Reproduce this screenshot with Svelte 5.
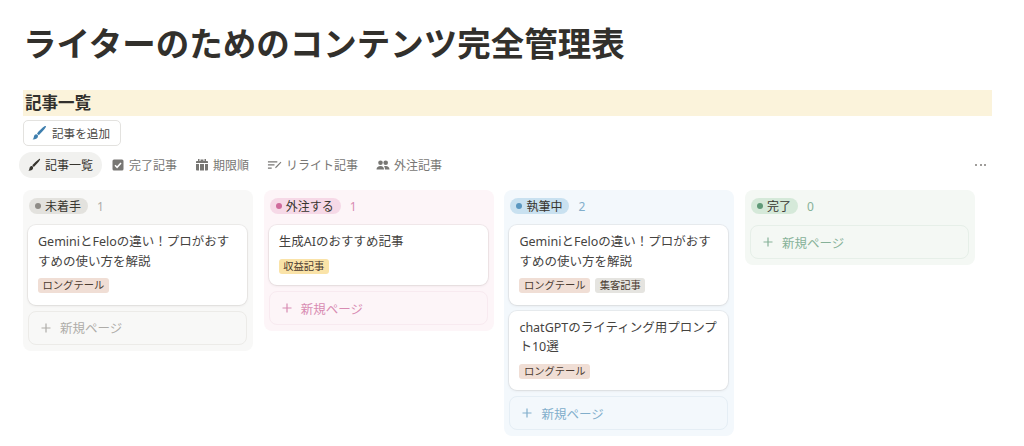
<script>
	const tabs = [
		{ label: '記事一覧', icon: 'brush', active: true },
		{ label: '完了記事', icon: 'check' },
		{ label: '期限順', icon: 'calendar' },
		{ label: 'リライト記事', icon: 'rewrite' },
		{ label: '外注記事', icon: 'people' }
	];

	const long = { text: 'ロングテール', tone: 'brown' };
	const columns = [
		{
			name: '未着手', tone: 'gray', count: 1,
			cards: [{ title: 'GeminiとFeloの違い！プロがおすすめの使い方を解説', tags: [long] }]
		},
		{
			name: '外注する', tone: 'pink', count: 1,
			cards: [{ title: '生成AIのおすすめ記事', tags: [{ text: '収益記事', tone: 'yellow' }] }]
		},
		{
			name: '執筆中', tone: 'blue', count: 2,
			cards: [
				{ title: 'GeminiとFeloの違い！プロがおすすめの使い方を解説', tags: [long, { text: '集客記事', tone: 'grey' }] },
				{ title: 'chatGPTのライティング用プロンプト10選', tags: [long] }
			]
		},
		{ name: '完了', tone: 'green', count: 0, cards: [] }
	];
</script>

{#snippet brush(size)}
	<svg width={size} height={size} viewBox="0 0 16 16" fill="currentColor" aria-hidden="true">
		<path d="M14.800 1.200c.3.3.3.6.1.9C13 5 10.300 8 7.800 10.200L6 8.400C8.200 5.800 11 3 13.900 1.100c.3-.2.6-.2.9.1z" />
		<path d="M5.200 9.200c1 0 1.800.8 1.800 1.800 0 2-1.700 3.500-5.500 3.500 1-.8 1.100-1.500 1.300-2.500.2-1.500 1.200-2.800 2.400-2.800z" />
	</svg>
{/snippet}

{#snippet tabIcon(name)}
	{#if name === 'brush'}
		{@render brush(14)}
	{:else if name === 'check'}
		<svg width="14" height="14" viewBox="0 0 14 14" aria-hidden="true">
			<rect x="1.500" y="1.500" width="11" height="11" rx="1.500" fill="currentColor" />
			<path d="M4 7.200l2.100 2.100L10 5" fill="none" stroke="#fff" stroke-width="1.500" />
		</svg>
	{:else if name === 'calendar'}
		<svg width="14" height="14" viewBox="0 0 14 14" fill="currentColor" aria-hidden="true">
			<path d="M3 1h1.500v2h1V1.500h3V3h1V1H11v2h1.200c.5 0 .8.300.8.800V5H1V3.800c0-.5.300-.8.800-.8H3z" />
			<path d="M1 6h3v6.500H1.800c-.5 0-.8-.3-.8-.8zM5 6h4v6.500H5zM10 6h3v5.700c0 .5-.3.8-.8.8H10z" />
		</svg>
	{:else if name === 'rewrite'}
		<svg width="15" height="14" viewBox="0 0 16 14" fill="currentColor" aria-hidden="true">
			<path d="M1 3h10v1.300H1zM1 6.300h7v1.300H1zM1 9.600h4v1.300H1z" />
			<path d="M14.500 3.500l.8.800-5 5.400-1.800.8.700-1.700z" />
		</svg>
	{:else}
		<svg width="14" height="14" viewBox="0 0 14 14" fill="currentColor" aria-hidden="true">
			<circle cx="4.500" cy="4.800" r="2.300" />
			<circle cx="9.700" cy="4.800" r="2.300" />
			<path d="M.5 11.500c0-2.300 1.700-3.500 4-3.500s3.500 1.200 3.500 3.500zM9 11.500c0-1.300-.3-2.500-1-3.300.6-.2 1.200-.2 1.800-.2 2.200 0 3.700 1.200 3.700 3.500z" />
		</svg>
	{/if}
{/snippet}

<main class="page">
	<h1>ライターのためのコンテンツ完全管理表</h1>

	<h2>記事一覧</h2>

	<button class="add">
		<span class="add-icon">{@render brush(16)}</span>
		記事を追加
	</button>

	<nav class="tabs">
		{#each tabs as tab}
			<span class="tab" class:active={tab.active}>
				{@render tabIcon(tab.icon)}
				{tab.label}
			</span>
		{/each}
		<span class="more"><i></i><i></i><i></i></span>
	</nav>

	<section class="board">
		{#each columns as col}
			<div class="column {col.tone}">
				<div class="head">
					<span class="pill"><i class="dot"></i>{col.name}</span>
					<span class="count">{col.count}</span>
				</div>
				{#each col.cards as card}
					<article class="card">
						<div class="title">{card.title}</div>
						<div class="tags">
							{#each card.tags as tag}
								<span class="tag {tag.tone}">{tag.text}</span>
							{/each}
						</div>
					</article>
				{/each}
				<div class="new">
					<svg class="plus" width="10" height="10" viewBox="0 0 10 10" aria-hidden="true">
						<path d="M5 .5v9M.5 5h9" fill="none" stroke="currentColor" stroke-width="1.200" />
					</svg>
					新規ページ
				</div>
			</div>
		{/each}
	</section>
</main>

<style>
	:global(body) {
		margin: 0;
		background: #fff;
		font-family: 'Noto Sans', 'Noto Sans CJK JP', sans-serif;
		color: #373530;
	}

	.page {
		padding: 0 32px 0 23px;
		height: 446px;
		overflow: hidden;
		box-sizing: border-box;
	}

	h1 {
		margin: 0;
		padding-top: 21px;
		height: 90px;
		box-sizing: border-box;
		font-size: 33.500px;
		line-height: 44px;
		font-weight: 700;
		color: #32302c;
	}

	h2 {
		margin: 0;
		height: 26px;
		padding-left: 2px;
		background: #fbf3db;
		font-size: 16.500px;
		line-height: 26px;
		font-weight: 700;
		color: #32302c;
	}

	.add {
		display: flex;
		align-items: center;
		gap: 5px;
		margin-top: 4px;
		height: 26px;
		width: 98px;
		padding: 0 0 0 7px;
		background: #fff;
		border: 1px solid #e3e2df;
		border-radius: 5px;
		font: inherit;
		font-size: 11.600px;
		color: #4a4844;
		box-sizing: border-box;
	}

	.add-icon {
		display: flex;
		color: #3f7fae;
	}

	.tabs {
		display: flex;
		align-items: center;
		height: 26px;
		margin: 6px 0 0 -4px;
		font-size: 12px;
		color: #787774;
	}

	.tab {
		display: flex;
		align-items: center;
		gap: 4px;
		height: 26px;
		padding: 0 9px 0 8px;
		margin-right: 1px;
		border-radius: 14px;
	}

	.tab.active {
		background: #f1f1ef;
		color: #37352f;
	}

	.more {
		display: flex;
		gap: 2.500px;
		margin-left: auto;
		margin-right: 6px;
	}

	.more i {
		width: 2px;
		height: 2px;
		border-radius: 50%;
		background: #7f7d78;
	}

	.board {
		display: flex;
		align-items: flex-start;
		gap: 10.700px;
		margin-top: 12px;
	}

	.column {
		width: 230px;
		flex: none;
		padding: 8px 6px 6px 5px;
		box-sizing: border-box;
		border-radius: 8px;
		background: var(--bg);
	}

	.head {
		display: flex;
		align-items: center;
		gap: 9px;
		height: 16px;
		padding-left: 1px;
		margin-bottom: 11px;
		font-size: 12px;
	}

	.pill {
		display: flex;
		align-items: center;
		gap: 4px;
		height: 16px;
		padding: 0 7px 0 6px;
		border-radius: 9px;
		background: var(--pill);
		color: #37352f;
	}

	.dot {
		width: 6px;
		height: 6px;
		border-radius: 50%;
		background: var(--accent);
	}

	.count {
		color: var(--soft);
	}

	.card {
		background: #fff;
		border-radius: 8px;
		padding: 7px 10px 11.500px;
		margin-bottom: 6px;
		box-shadow: 0 0 0 1px rgba(42, 28, 0, 0.05), 0 1px 3px rgba(42, 28, 0, 0.08);
	}

	.title {
		font-size: 12.500px;
		line-height: 19.500px;
		color: #45433f;
	}

	.tags {
		display: flex;
		gap: 5px;
		margin-top: 7px;
	}

	.tag {
		height: 15px;
		padding: 0 4.500px;
		border-radius: 3px;
		font-size: 10.300px;
		line-height: 15px;
		color: #4a3a30;
	}

	.tag.brown { background: #f0ded5; }
	.tag.yellow { background: #fae3a8; }
	.tag.grey { background: #e5e4e0; }

	.new {
		display: flex;
		align-items: center;
		gap: 9px;
		height: 34px;
		padding-left: 12px;
		box-sizing: border-box;
		border: 1px solid var(--line);
		border-radius: 8px;
		font-size: 12.500px;
		color: var(--soft);
	}

	.plus {
		color: var(--soft);
	}

	.gray {
		--bg: #f8f8f7;
		--pill: #e3e2de;
		--accent: #8e8b86;
		--soft: #aeaca8;
		--line: #ecebe8;
	}

	.pink {
		--bg: #fdf5f8;
		--pill: #f6d9e7;
		--accent: #cf6b9c;
		--soft: #d88bb2;
		--line: #f8eaf0;
	}

	.blue {
		--bg: #f3f8fc;
		--pill: #c9e1f0;
		--accent: #5b97c0;
		--soft: #81aecb;
		--line: #e5eef5;
	}

	.green {
		--bg: #f4f8f4;
		--pill: #d5e9d9;
		--accent: #5f9a78;
		--soft: #86b198;
		--line: #e6efe8;
	}
</style>
